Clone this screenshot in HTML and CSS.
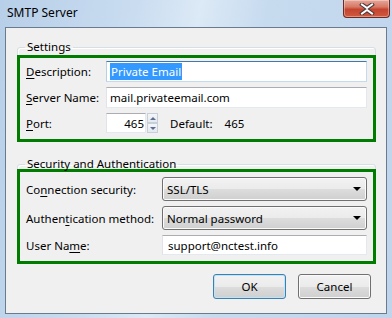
FILE: index.html
```html
<!DOCTYPE html>
<html lang="en">
  <head>
    <meta charset="UTF-8" />
    <title>SMTP Server</title>
    <link rel="stylesheet" href="styles.css">
  </head>
  <body>
    <div class="window">
      <div class="titlebar">
        <span class="title">SMTP Server</span>
        <button class="close" type="button" title="Close">
          <svg width="18" height="12" viewBox="0 0 18 12">
            <path d="M4 1.5 L9 5 L14 1.5 M4 10.5 L9 7 L14 10.5" fill="none" stroke="#4a3a3a" stroke-width="4" stroke-linecap="square" />
            <path d="M4 1.5 L9 5 L14 1.5 M4 10.5 L9 7 L14 10.5" fill="none" stroke="#fff" stroke-width="2" stroke-linecap="square" />
          </svg>
        </button>
      </div>

      <div class="client">
        <fieldset class="group">
          <legend>Settings</legend>
          <div class="mark">
            <div class="row settings-row">
              <label for="description"><u>D</u>escription:</label>
              <div class="textbox focused" id="description"><span class="selection">Private Email</span></div>
            </div>
            <div class="row settings-row">
              <label for="server"><u>S</u>erver Name:</label>
              <input class="textbox" type="text" id="server" value="mail.privateemail.com" />
            </div>
            <div class="row settings-row">
              <label for="port"><u>P</u>ort:</label>
              <div class="port">
                <input class="textbox spin-input" type="text" id="port" value="465" />
                <div class="spinner">
                  <span class="spin-up"></span>
                  <span class="spin-down"></span>
                </div>
                <span class="default-label">Default:</span>
                <span class="default-value">465</span>
              </div>
            </div>
          </div>
        </fieldset>

        <fieldset class="group">
          <legend>Security and Authentication</legend>
          <div class="mark mark-security">
            <div class="row security-row">
              <label for="security">Co<u>n</u>nection security:</label>
              <div class="select">
                <select id="security">
                  <option>SSL/TLS</option>
                </select>
              </div>
            </div>
            <div class="row security-row">
              <label for="auth">Authen<u>t</u>ication method:</label>
              <div class="select">
                <select id="auth">
                  <option>Normal password</option>
                </select>
              </div>
            </div>
            <div class="row security-row">
              <label for="username">User Na<u>m</u>e:</label>
              <input class="textbox" type="text" id="username" value="support@nctest.info" />
            </div>
          </div>
        </fieldset>

        <div class="buttons">
          <button type="button" class="btn btn-default">OK</button>
          <button type="button" class="btn">Cancel</button>
        </div>
      </div>
    </div>
  </body>
</html>
```

FILE: styles.css
```css
body {
  margin: 0;
  font-family: "Noto Sans", "Open Sans", sans-serif;
  font-size: 11.5px;
  color: #000;
  background: #b9d1ea;
}
.window {
  width: 392px;
  height: 318px;
  background: linear-gradient(100deg, #b7cfe8 0%, #c9dcf0 30%, #dce9f6 45%, #c7dbef 60%, #bfd5ec 100%);
}
.titlebar {
  height: 27px;
  display: flex;
  justify-content: space-between;
  align-items: flex-start;
}
.title {
  padding: 5px 0 0 7px;
  font-size: 12px;
  line-height: 16px;
}
.close {
  width: 47px;
  height: 18px;
  margin-right: 2px;
  padding: 0;
  border: 1px solid #6e2a22;
  border-top: none;
  border-radius: 0 0 4px 4px;
  background: linear-gradient(#e8a597, #d77a68 40%, #c5442f 55%, #cf5a40);
  box-shadow: inset 0 0 0 1px rgba(255, 255, 255, 0.35);
  display: flex;
  align-items: center;
  justify-content: center;
}
.client {
  margin: 0 5px;
  height: 285px;
  border: 1px solid #6b7b8e;
  background: #f0f0f0;
}
.group {
  margin: 11px 10px 0 11px;
  padding: 0;
  border: 1px solid #d5dfe5;
  border-radius: 3px;
  box-shadow: inset 1px 1px 0 #fff;
}
.group + .group {
  margin-top: 14px;
}
.group legend {
  margin-left: 7px;
  padding: 0 2px;
  line-height: 16px;
}
.mark {
  margin: 0 -1px -1px -1px;
  border: 3px solid #007d00;
  padding: 3px 6px 6px 6px;
  display: grid;
  row-gap: 5px;
}
.mark-security {
  margin-top: -3px;
  padding-top: 5px;
}
.row {
  display: grid;
  align-items: center;
}
.settings-row {
  grid-template-columns: 80px 1fr;
}
.security-row {
  grid-template-columns: 136px 1fr;
}
label u {
  text-decoration-thickness: 1px;
  text-underline-offset: 2px;
}
.textbox {
  box-sizing: border-box;
  height: 21px;
  margin: 0;
  padding: 0 3px;
  font: inherit;
  color: #000;
  background: #fff;
  border: 1px solid #e3e9ef;
  border-top-color: #abadb3;
  border-left-color: #e2e3ea;
  outline: none;
  display: flex;
  align-items: center;
}
.textbox.focused {
  border-color: #c5daed;
  border-top-color: #3d7bad;
  border-left-color: #b5cfe7;
}
.selection {
  background: #3399ff;
  color: #fff;
  padding: 0 1px;
  line-height: 17px;
}
#username {
  height: 20px;
  padding-left: 5px;
}
.port {
  display: flex;
  align-items: center;
}
.spin-input {
  width: 40px;
  height: 20px;
  text-align: right;
  padding-right: 1px;
}
.spinner {
  width: 11px;
  height: 20px;
  margin-left: 1px;
  display: flex;
  flex-direction: column;
}
.spin-up,
.spin-down {
  flex: 1;
  box-sizing: border-box;
  border: 1px solid #c7cfd9;
  background: linear-gradient(#f4f6f9, #e4e9ef);
  display: flex;
  align-items: center;
  justify-content: center;
}
.spin-up::after,
.spin-down::after {
  content: "";
  border-left: 3px solid transparent;
  border-right: 3px solid transparent;
}
.spin-up::after {
  border-bottom: 3px solid #5c6f93;
}
.spin-down::after {
  border-top: 3px solid #5c6f93;
}
.default-label {
  margin-left: 12px;
}
.default-value {
  margin-left: 12px;
}
.select {
  position: relative;
  height: 24px;
}
.select select {
  appearance: none;
  width: 100%;
  height: 24px;
  margin: 0;
  padding: 0 4px;
  font: inherit;
  color: #000;
  border: 1px solid #707070;
  border-radius: 3px;
  background: linear-gradient(#f2f2f2 0%, #ebebeb 50%, #dddddd 50%, #cfcfcf 100%);
  box-shadow: inset 0 0 0 1px #fbfbfb;
}
.select::after {
  content: "";
  position: absolute;
  right: 6px;
  top: 10px;
  border-left: 4px solid transparent;
  border-right: 4px solid transparent;
  border-top: 4px solid #000;
  pointer-events: none;
}
.buttons {
  display: flex;
  justify-content: flex-end;
  gap: 12px;
  margin-top: 10px;
  padding-right: 15px;
}
.btn {
  width: 73px;
  height: 25px;
  padding: 0;
  font: inherit;
  color: #000;
  border: 1px solid #707070;
  border-radius: 3px;
  background: linear-gradient(#f2f2f2 0%, #ebebeb 50%, #dddddd 50%, #cfcfcf 100%);
  box-shadow: inset 0 0 0 1px #fbfbfb;
}
.btn-default {
  border-color: #3c7fb1;
  box-shadow: inset 0 0 0 1px #bfe3f7;
}
```
